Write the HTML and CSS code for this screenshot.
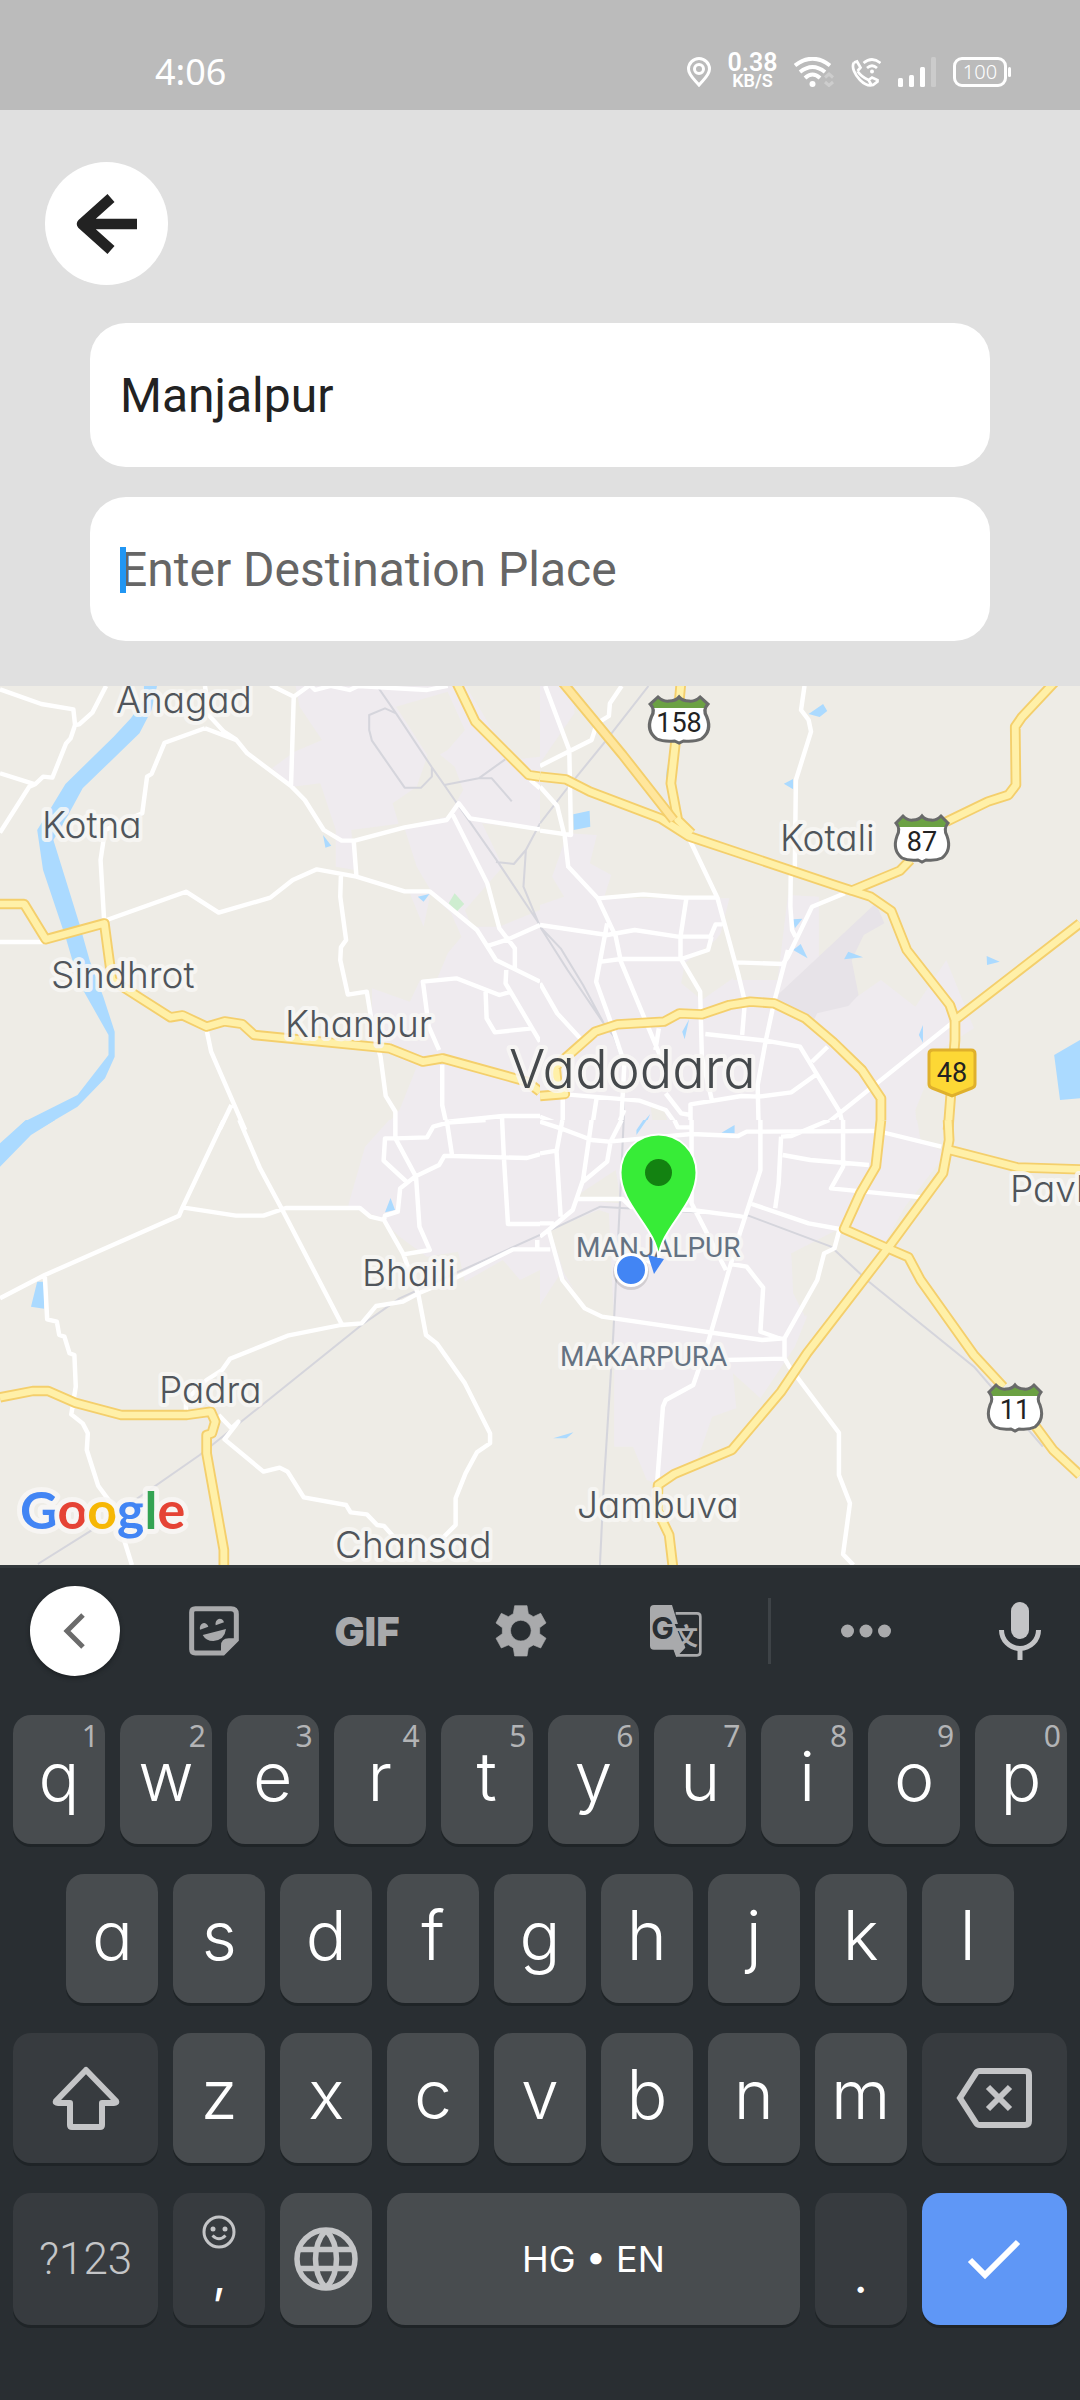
FILE: index.html
```html
<!DOCTYPE html>
<html lang="en">
<head>
<meta charset="utf-8">
<meta name="viewport" content="width=device-width, initial-scale=1">
<title>Choose destination</title>
<link rel="stylesheet" href="styles.css">
</head>
<body>
<div class="screen">
  <header class="status">
    <time class="clock">4:06</time>
    <div class="status-icons">
      <svg width="24" height="30" viewBox="0 0 24 30" fill="none" stroke="#fff" stroke-width="3"><path d="M12 28C7 22 1.500 18 1.500 12a10.500 10.500 0 0 1 21 0C22.500 18 17 22 12 28Z"/><circle cx="12" cy="12" r="4.500"/></svg>
      <div class="speed"><span class="speed-value">0.38</span><span class="speed-unit">KB/S</span></div>
      <svg width="40" height="30" viewBox="0 0 40 30" fill="none" stroke="#fff" stroke-width="4"><path d="M1 8.500Q18.500-5 36 8.500M6 15Q18.500 5 31 15M11 21Q18.500 14 26 21"/><circle cx="18.500" cy="27" r="3" fill="#fff" stroke="none"/><path d="M31 20.500l4-3.500 4 3.500M31 25l4 3.500 4-3.500" stroke="#cdcdcd" stroke-width="3"/></svg>
      <svg width="30" height="30" viewBox="0 0 30 30" fill="none" stroke="#fff" stroke-width="2.700"><path d="M3 5.500L6 4.500l3.500 6-3 3.500M3 5.500C0 10 4 18 9 23c4 4 8 6.500 13 5l4.500-3.500v-1.500L21 20.500 17.500 23C13 21 9 18 6.500 14M17.500 23l3 5"/><path d="M12.500 6Q21-1 29.500 6M16 11Q21 6.500 26 11"/><circle cx="21" cy="14.500" r="2" fill="#fff" stroke="none"/></svg>
      <svg width="38" height="30" viewBox="0 0 38 30" fill="#fff"><rect y="21" width="5" height="9" rx="1.500"/><rect x="11" y="18" width="5" height="12" rx="1.500"/><rect x="22" y="10" width="5" height="20" rx="1.500"/><rect x="33" width="5" height="30" rx="1.500" fill="#cbcbcb"/></svg>
      <div class="battery">100</div>
    </div>
  </header>

  <section class="search">
    <button class="back" aria-label="Back"><svg width="64" height="64" viewBox="0 0 64 64" fill="none" stroke="#222" stroke-width="10.500" stroke-linejoin="round"><path d="M62 32H10M36 6L7 32l29 26"/></svg></button>
    <div class="fields">
      <div class="field"><input class="place" type="text" value="Manjalpur" aria-label="Starting place"></div>
      <div class="field field-active"><input class="place" type="text" placeholder="Enter Destination Place" aria-label="Destination place"></div>
    </div>
  </section>

  <main class="map">
    <svg class="map-art" viewBox="0 0 1080 879" role="img" aria-label="Map of Vadodara">
      <rect class="land" width="1080" height="879"/>

      <!-- north-west tile -->
      <svg y="-6" width="540" height="450" viewBox="0 0 1568 1350" preserveAspectRatio="none" class="tile">
        <path class="urban" d="M855 0H1568V1350H1110L1160 1290 1210 1160 1110 1110 1080 1000 1080 925 1190 965 1220 900 1270 895 1300 820 1340 770 1310 700 1250 640 1230 740 1190 640 1250 630 1210 560 1170 430 1020 450 1030 570 975 560 975 450 930 310 850 320 790 265 855 215 935 180 870 80Z"/>
        <path class="land" d="M1140 370L1210 320 1250 200 1320 260 1345 330 1300 410 1160 440ZM1150 80L1300 35 1350 150 1300 210 1250 240ZM1340 0H1568V230L1480 240 1390 80ZM1350 690L1460 560 1400 430 1568 450V690L1450 740 1370 740Z"/>
        <path class="park" d="M1320 640L1348 672 1327 694 1303 670Z"/>
        <path class="water" d="M418 0H460L440 90 405 160 300 265 240 325 190 420 155 480 230 730 260 840 300 950 333 1055V1130L305 1195 225 1280 110 1350H45L70 1325 225 1245 315 1125V1065L230 910 190 770 125 570 108 450 150 380 190 312 330 170 380 115 418 60ZM938 465L962 497 945 503ZM1213 650L1247 642 1230 665Z"/>
        <path class="rail" d="M1095 18L1150 100 1254 262 1290 315 1328 372 1445 545 1568 735M1150 100L1118 85 1072 105V150L1080 182 1175 323H1223L1254 290V262M1290 315L1390 295 1467 238M1390 295H1428L1486 364M1440 546L1492 552 1527 510 1568 430M1527 510L1520 620 1568 740"/>
        <path class="road" d="M0 28L120 72 213 88 218 135 205 175 192 190 152 293 125 290 102 313 0 280M218 135L230 133 268 98 308 18M102 313L85 320 0 458M595 18L610 110 650 155 685 178 718 220 845 318 885 360 940 450 992 482H1030L1175 442 1297 420 1332 370 1365 415 1568 448M595 145L478 188 440 282 427 290 413 400 390 410 305 450 292 540 302 715M595 145L685 180M310 720L540 635 635 698 785 653 850 600 920 568 1035 590 1175 634H1248L1385 750 1440 840 1568 905M1027 482L1035 590M990 585L988 650 1005 780 990 802 988 840 1010 944 1065 935 1085 1060 1105 1130 1120 1248 1148 1295V1350M845 318L853 50 785 15M853 50L900 15 915 30 960 18 1015 30 1040 18 1240 30 1300 18M1310 395L1415 610 1450 745 1495 805V870M1415 798L1475 778 1568 735M1470 870L1468 910 1568 1085M1485 935L1450 945 1325 895 1228 905 1245 1040 1275 1110M1410 935L1413 1015 1437 1057 1545 1045M1284 1155V1275L1300 1350M1250 1345L1300 1325 1460 1308H1568M1458 1310V1350M0 786H125M600 1050L613 1115 712 1350M672 1275L637 1350M1540 300L1568 325"/>
        <path class="casing" d="M0 672H70L133 778 303 730 325 900 495 1012 530 1006 600 1040 652 1024 703 1032 738 1065 1130 1105 1228 1145 1285 1135 1530 1205 1568 1235M1322 0L1380 125 1535 285 1568 290"/>
        <path class="highway" d="M0 672H70L133 778 303 730 325 900 495 1012 530 1006 600 1040 652 1024 703 1032 738 1065 1130 1105 1228 1145 1285 1135 1530 1205 1568 1235M1322 0L1380 125 1535 285 1568 290"/>
      </svg>

      <!-- north-east tile -->
      <svg x="540" y="-6" width="540" height="450" viewBox="0 0 1568 1350" preserveAspectRatio="none" class="tile">
        <path class="urban" d="M0 675L70 650 35 590 80 460 165 465 145 550 207 585 185 655 550 655 515 800 580 860 560 900 690 900 720 645 810 650 810 830 960 700 900 830 920 950 990 900 1090 980 1180 840 1260 1045 1160 1110 1090 1290 1095 1350H0Z"/>
        <path class="urban" d="M0 0H95L100 100 0 250Z"/>
        <path class="land" d="M540 740L560 720 690 700V900L560 895 470 960 410 910 420 850 510 780ZM320 1270L360 1290 380 1350H330Z"/>
        <path class="airport" d="M680 955L975 670 1000 730 940 765 905 840 925 945 895 978 805 1000 790 1030Z"/>
        <path class="water" d="M97 403L144 392 146 440 98 450ZM780 102L822 72 834 93 812 111ZM708 311L735 297V328ZM735 718L762 716 740 745ZM735 810L757 792 777 835ZM883 838L895 815 938 832ZM1297 828L1335 845 1298 855ZM1493 1125L1568 1080V1255L1510 1260ZM1100 1065L1112 1035V1088ZM413 1055L433 1018 420 1078ZM280 1350L320 1302 300 1350ZM540 1350L563 1334V1350ZM366 290L370 250V300Z"/>
        <path class="rail" d="M315 18L185 190 75 330 0 430M0 740L60 805 125 915 185 1030 215 1070 243 1150V1350M0 740L80 870 185 1030"/>
        <path class="road" d="M15 18L85 210 90 465 0 452M0 258L150 180 165 130 200 108 203 70 237 18M0 320L50 378 72 470 82 560 168 655 300 643 415 653H515L435 480M168 655L220 770 235 845 350 1130M515 653L575 880 595 965 587 1065M195 730L163 905 205 1025 245 1150 235 1350M0 735L195 765 275 750 400 770H495L510 733H530M425 655L408 770V835L465 935 470 1130 500 1265M178 845L235 837H410L488 810 498 770M570 847L705 852 720 830 790 680 885 640M768 18L758 90 780 120 787 155 743 300 740 560 728 590 727 680 732 750 742 770M720 810L680 965 655 1085 632 1215 635 1350M0 910L50 1000 130 1090M480 1062L655 1082 755 1100 870 1295 883 1350M790 1145L835 1100M800 1185L730 1237 635 1250 585 1248 437 1273V1345M75 1243L290 1262 365 1290 400 1340 437 1343M365 1240L410 1300 437 1305M345 1045L335 1110M1195 1030L815 1345M66 1250V1350M165 1250L150 1350M0 1310L100 1350M245 1290L220 1350M640 1350H840"/>
        <path class="casing" d="M410 0L393 190 380 310 400 420 440 460M0 290L75 298 145 335 350 415 430 468 850 613 960 650 1020 693 1065 810 1190 975 1205 1020 1205 1080 1185 1350M850 613L905 632 1045 572 1075 540M1180 425L1300 365 1360 345 1382 315 1380 140 1400 110 1500 0M1205 1020L1568 730M0 1248L72 1242 50 1210 45 1160 160 1055 225 1033 360 1025 405 1000 470 1003 550 975 610 965 680 970 770 1015 850 1085 935 1170 990 1255V1350"/>
        <path class="highway" d="M410 0L393 190 380 310 400 420 440 460M0 290L75 298 145 335 350 415 430 468 850 613 960 650 1020 693 1065 810 1190 975 1205 1020 1205 1080 1185 1350M850 613L905 632 1045 572 1075 540M1180 425L1300 365 1360 345 1382 315 1380 140 1400 110 1500 0M1205 1020L1568 730M0 1248L72 1242 50 1210 45 1160 160 1055 225 1033 360 1025 405 1000 470 1003 550 975 610 965 680 970 770 1015 850 1085 935 1170 990 1255V1350"/>
        <path class="casing" d="M60 0L240 225 388 420"/>
        <path class="highway trunk" d="M60 0L240 225 388 420"/>
      </svg>

      <!-- south-west tile -->
      <svg y="434" width="540" height="450" viewBox="0 0 1568 1350" preserveAspectRatio="none" class="tile">
        <path class="urban" d="M1568 0V450L1510 480 1460 420 1350 485 1330 395 1240 410 1160 350 1100 290 1010 260 1060 80 1130 0Z"/>
        <path class="water" d="M0 70L75 0H160L90 45 0 140ZM108 485H128V566L90 560ZM1134 234L1147 270 1118 277Z"/>
        <path class="rail" d="M110 1332L260 1235 580 1005 1050 615 1160 535 1568 345"/>
        <path class="road" d="M650 0L530 262 520 287 130 465 0 535M695 0L755 145 820 270 992 612M530 262L685 287H765L830 264H1045L1075 290 1115 300 1170 400 1215 525 1237 645 1268 670 1350 790 1423 940V970L1385 997 1352 1060 1323 1135V1215L1260 1280M130 465L137 598 165 605 172 645 187 650 202 700 216 705 220 800 207 883 240 910 255 940 252 990 285 1097 330 1160 365 1275 383 1335M1115 300L1118 287 1155 275 1162 205 1205 170 1275 135 1290 108H1315L1530 114 1568 103M1148 0V55L1208 170 1218 320 1248 390 1172 403M1148 55H1118L1114 122 1180 185M1148 55L1240 52 1258 20 1300 8 1410 0M1297 0L1313 108M1458 0L1463 110 1475 312H1568M1568 388H1490L1320 475 1215 520 1170 545 1092 558 1050 610 990 615 835 647 668 716 645 750 600 780 540 840V875M1560 360V388M635 885L672 925 692 905 652 958 765 1055 812 1043 835 1055 882 1132 1005 1155 1018 1177 1065 1183 1095 1215 1115 1218 1160 1270"/>
        <path class="casing" d="M0 832L95 813H140L218 848 352 885H543L612 875 625 905 615 940 600 945V1000L650 1290V1350"/>
        <path class="highway" d="M0 832L95 813H140L218 848 352 885H543L612 875 625 905 615 940 600 945V1000L650 1290V1350"/>
      </svg>

      <!-- south-east tile -->
      <svg x="540" y="434" width="540" height="450" viewBox="0 0 1568 1350" preserveAspectRatio="none" class="tile">
        <path class="urban" d="M0 0H1095L1105 60 1180 100 1120 180 1060 260 1000 370 880 320 730 400 740 500 775 590 740 680 640 835 560 760 570 865 500 890 450 1040 340 1090 310 1080 270 980 215 980 215 600 140 560 60 460 0 555Z"/>
        <path class="land" d="M30 330L170 270 200 280 215 600 130 560 70 460ZM110 225L220 150 235 250 110 240ZM730 400L830 380 820 450 770 590 735 520Z"/>
        <path class="water" d="M280 45V30L300 0H310ZM527 38L565 15V40ZM38 955L97 937 77 955Z"/>
        <path class="rail" d="M243 0L232 250 213 640 185 1100 174 1335M0 345L175 260 450 277 605 287 845 380 955 485 1260 740 1460 980"/>
        <path class="road" d="M65 0L48 95 60 290M150 0L125 180 95 270 25 330 0 350M0 100L48 92M0 5L60 25 150 60 200 65 300 55 440 42 575 48 600 35 980 33 1165 80M237 0L205 65 195 125 125 185M110 237H240L265 262 440 270 590 290M0 310H40M0 388H30M25 330L65 480 130 565 180 590 645 660 710 655V715L725 742 868 938V1065L900 1150 880 1303 910 1335M440 0V250L540 450M640 0V150L580 340 490 660 445 795 365 840 357 860 340 1090M700 50L693 190 683 265M615 252L780 310 870 327 855 385 825 400 805 480 710 655M700 50L730 48 840 0M880 0V140L845 205 1110 232M705 105L785 120 955 135M555 432L600 440 648 503 640 635 700 657M540 720L715 716M390 0L400 22H440M310 420L345 440"/>
        <path class="casing" d="M990 0L975 140 930 220 883 327 1010 385 1070 412 1105 480 1260 705 1345 800M1440 920L1490 990 1568 1065M1185 0L1188 60 1170 160 1010 385 775 700 700 815 557 990 390 1062 343 1095 340 1170 375 1245 387 1350M1190 90L1385 142 1568 148"/>
        <path class="highway" d="M990 0L975 140 930 220 883 327 1010 385 1070 412 1105 480 1260 705 1345 800M1440 920L1490 990 1568 1065M1185 0L1188 60 1170 160 1010 385 775 700 700 815 557 990 390 1062 343 1095 340 1170 375 1245 387 1350M1190 90L1385 142 1568 148"/>
      </svg>

      <defs>
        <g id="shield">
          <path d="M9 2Q14 7 19 6 25 6 28 2 31 6 37 6 42 7 47 2L54 9Q49 15 53 22 58 36 48 44 42 47 32 46L28 48 24 46Q14 47 8 44-2 36 3 22 7 15 2 9Z" fill="#fff"/>
          <path d="M9 2Q14 7 19 6 25 6 28 2 31 6 37 6 42 7 47 2L54 9 52 13H4L2 9Z" fill="#6ba143"/>
          <path d="M9 2Q14 7 19 6 25 6 28 2 31 6 37 6 42 7 47 2L54 9Q49 15 53 22 58 36 48 44 42 47 32 46L28 48 24 46Q14 47 8 44-2 36 3 22 7 15 2 9Z" fill="none" stroke="#696a6a" stroke-width="3"/>
        </g>
      </defs>
      <g transform="translate(648 9) scale(1.110 1)"><use href="#shield"/></g>
      <use href="#shield" x="894" y="128"/>
      <use href="#shield" x="987" y="697"/>
      <path d="M933 364H971Q975 364 975 368V398Q975 401 972 402L952 410 932 402Q929 401 929 398V368Q929 364 933 364Z" fill="#fdd835" stroke="#dfb02c" stroke-width="3"/>
      <g class="route">
        <text x="679" y="46">158</text><text x="922" y="165">87</text><text x="1015" y="733">11</text><text x="952" y="396">48</text>
      </g>

      <g class="town">
        <text x="116" y="27">Anagad</text>
        <text x="42" y="152">Kotna</text>
        <text x="51" y="302">Sindhrot</text>
        <text x="285" y="351">Khanpur</text>
        <text x="780" y="165">Kotali</text>
        <text x="362" y="600">Bhaili</text>
        <text x="159" y="717">Padra</text>
        <text x="335" y="872">Chansad</text>
        <text x="577" y="832">Jambuva</text>
        <text x="1010" y="516">Pavl</text>
      </g>
      <text class="city" x="509" y="402">Vadodara</text>
      <g class="suburb">
        <text x="576" y="571">MANJALPUR</text>
        <text x="560" y="680">MAKARPURA</text>
      </g>

      <path d="M648 569L664 573 654 588Z" fill="#4285f4"/>
      <circle cx="631" cy="586" r="18" fill="#000" opacity=".12"/>
      <circle cx="631" cy="584" r="15.500" fill="#4285f4" stroke="#fff" stroke-width="3"/>
      <path d="M658.500 572C656 541 620.500 520 620.500 486.500a38 38 0 0 1 76 0C696.500 520 661 541 658.500 572Z" fill="#37ec37" stroke="#fff" stroke-width="2"/>
      <circle cx="658.500" cy="486.500" r="13.500" fill="#138211"/>

      <text class="google" x="20" y="843"><tspan fill="#4285f4">G</tspan><tspan fill="#e54335">o</tspan><tspan fill="#f6b705">o</tspan><tspan fill="#4285f4">g</tspan><tspan fill="#34a353">l</tspan><tspan fill="#e54335">e</tspan></text>
    </svg>
  </main>

  <section class="keyboard" aria-label="Keyboard">
    <div class="toolbar">
      <button class="tool collapse" aria-label="Collapse toolbar"><svg width="24" height="36" viewBox="0 0 24 36" fill="none" stroke="#6b6b6b" stroke-width="5"><path d="M20 2L4 18l16 16"/></svg></button>
      <button class="tool" aria-label="Stickers"><svg width="50" height="50" viewBox="-3 48 150 150"><path d="M16 56H123Q139 56 139 72V149L99 189H16Q5 189 5 178V67Q5 56 16 56Z" fill="none" stroke="#a9aaac" stroke-width="15"/><path d="M93 189V168Q93 145 116 145H143L100 194Z" fill="#a9aaac"/><path d="M30 119A13 15 0 0 1 55 110ZM77 106A13 15 0 0 1 102 97ZM38 135L108 117Q104 150 70 153 48 153 38 135Z" fill="#a9aaac"/></svg></button>
      <button class="tool gif">GIF</button>
      <button class="tool" aria-label="Settings"><svg width="52" height="52" viewBox="915 51 156 156"><path fill="#a9aaac" fill-rule="evenodd" stroke="#a9aaac" stroke-width="2" stroke-linejoin="round" d="M974 53H1011L1015 77 1030 86 1052 76 1068 105 1049 119V137L1068 151 1052 180 1030 171 1015 180 1011 204H974L970 180 955 171 934 180 918 151 937 137V119L918 105 934 76 955 86 970 77ZM992 97a31 31 0 1 0 1 0Z"/></svg></button>
      <button class="tool" aria-label="Translate"><svg width="52" height="52" viewBox="0 0 156 156"><path d="M77 25H141Q151 25 151 35V141Q151 151 141 151H81L66 110" fill="none" stroke="#a9aaac" stroke-width="8"/><path d="M12 0H66L106 128 80 156 72 134H12Q0 134 0 122V12Q0 0 12 0Z" fill="#a9aaac"/><text class="tr-g" x="4" y="103">G</text><path d="M74 57H102L113 115 98 114Z" fill="#292e32"/><text class="tr-w" x="72" y="121">文</text></svg></button>
      <span class="divider"></span>
      <button class="tool" aria-label="More"><svg width="50" height="14" viewBox="0 0 50 14" fill="#a9aaac"><circle cx="6.500" cy="7" r="6.500"/><circle cx="25" cy="7" r="6.500"/><circle cx="43.500" cy="7" r="6.500"/></svg></button>
      <button class="tool mic" aria-label="Voice input"><svg width="42" height="58" viewBox="0 0 42 58"><rect x="12" width="18" height="37" rx="9" fill="#c4c5c7"/><path d="M2.500 28a18.500 18.500 0 0 0 37 0M21 47v11" fill="none" stroke="#c4c5c7" stroke-width="5"/></svg></button>
    </div>
    <div class="keys">
      <button class="key">q<span class="hint">1</span></button><button class="key">w<span class="hint">2</span></button><button class="key">e<span class="hint">3</span></button><button class="key">r<span class="hint">4</span></button><button class="key">t<span class="hint">5</span></button><button class="key">y<span class="hint">6</span></button><button class="key">u<span class="hint">7</span></button><button class="key">i<span class="hint">8</span></button><button class="key">o<span class="hint">9</span></button><button class="key">p<span class="hint">0</span></button>
      <button class="key indent">a</button><button class="key">s</button><button class="key">d</button><button class="key">f</button><button class="key">g</button><button class="key">h</button><button class="key">j</button><button class="key">k</button><button class="key">l</button>
      <button class="key wide dark row-start" aria-label="Shift"><svg width="68" height="66" viewBox="0 0 68 66" fill="none" stroke="#c4c5c7" stroke-width="6" stroke-linejoin="round"><path d="M34 5L4 36q-1 2 2 2H18V60q0 2 2 2H48q2 0 2-2V38H62q3 0 2-2Z"/></svg></button>
      <button class="key">z</button><button class="key">x</button><button class="key">c</button><button class="key">v</button><button class="key">b</button><button class="key">n</button><button class="key">m</button>
      <button class="key wide dark" aria-label="Backspace"><svg width="76" height="60" viewBox="0 0 76 60" fill="none" stroke="#c4c5c7" stroke-width="6"><path d="M24 3H69q4 0 4 4V53q0 4-4 4H24q-3 0-4-2L4 30 20 5q1-2 4-2Z"/><path d="M32 19L54 41M54 19L32 41"/></svg></button>
      <button class="key wide dark symbols">?123</button>
      <button class="key dark stacked" aria-label="Comma and emoji"><svg width="34" height="34" viewBox="0 0 34 34" fill="none" stroke="#c4c5c7" stroke-width="3"><circle cx="17" cy="17" r="15"/><path d="M10.500 20.500q6.500 6.500 13 0"/><circle cx="11" cy="14" r="2.500" fill="#c4c5c7" stroke="none"/><circle cx="23" cy="14" r="2.500" fill="#c4c5c7" stroke="none"/></svg><span class="mark">,</span></button>
      <button class="key globe" aria-label="Switch language"><svg width="64" height="64" viewBox="0 0 64 64" fill="none" stroke="#c4c5c7" stroke-width="5.500"><circle cx="32" cy="32" r="29"/><path d="M5 22.500H59M5 41.500H59M32 3C18 18 18 46 32 61M32 3C46 18 46 46 32 61"/></svg></button>
      <button class="key space">HG • EN</button>
      <button class="key dark stacked"><span class="mark">.</span></button>
      <button class="key wide enter" aria-label="Done"><svg width="54" height="42" viewBox="0 0 54 42" fill="none" stroke="#fff" stroke-width="6"><path d="M3 22L18 37 51 4"/></svg></button>
    </div>
  </section>
</div>
</body>
</html>
```
FILE: styles.css
```css
* { box-sizing: border-box; }

body {
  margin: 0;
  background: #292e32;
  font-family: Roboto, "Noto Sans", sans-serif;
}

button {
  border: 0;
  padding: 0;
  background: none;
  font: inherit;
  color: inherit;
}

svg { display: block; }

.screen {
  display: flex;
  flex-direction: column;
  min-height: 100vh;
}

/* Status bar */
.status {
  display: flex;
  align-items: center;
  justify-content: space-between;
  height: 110px;
  padding: 34px 69px 0 155px;
  background: #bbb;
  color: #fff;
  font-family: "Noto Sans", sans-serif;
}

.clock {
  font-size: 36px;
  line-height: 40px;
}

.status-icons {
  display: flex;
  align-items: center;
  gap: 17px;
}

.speed {
  display: flex;
  flex-direction: column;
  align-items: center;
  width: 49px;
  font-family: Roboto, sans-serif;
  font-weight: 600;
  line-height: 18px;
}

.speed-value { font-size: 25px; }
.speed-unit { font-size: 18px; }

.battery {
  position: relative;
  width: 54px;
  height: 30px;
  margin-right: 4px;
  border: 3px solid #fff;
  border-radius: 9px;
  font-size: 20px;
  font-weight: 300;
  line-height: 24px;
  text-align: center;
}

.battery::after {
  content: "";
  position: absolute;
  right: -7px;
  top: 7px;
  width: 3px;
  height: 10px;
  border-radius: 2px;
  background: #fff;
}

/* Search header */
.search {
  padding: 52px 45px 45px;
  background: #e0e0e0;
}

.back {
  display: flex;
  align-items: center;
  justify-content: center;
  width: 123px;
  height: 123px;
  border-radius: 50%;
  background: #fff;
}

.fields {
  display: flex;
  flex-direction: column;
  gap: 30px;
  margin: 38px 45px 0;
}

.field { position: relative; }

.place {
  display: block;
  width: 100%;
  height: 144px;
  padding: 0 30px;
  border: 0;
  border-radius: 36px;
  background: #fff;
  color: #222;
  font-family: Roboto, sans-serif;
  font-size: 48px;
}

.place::placeholder {
  color: #666;
  opacity: 1;
}

.field-active::after {
  content: "";
  position: absolute;
  left: 30px;
  top: 50px;
  width: 6px;
  height: 46px;
  background: #2196f3;
}

/* Map */
.map-art {
  width: 100%;
  height: auto;
}

.tile { overflow: hidden; }
.urban { fill: #efebef; }
.land { fill: #eeece6; }
.airport { fill: #e7e3e8; }
.park { fill: #ceedd0; }
.water { fill: #abdaff; }

.rail, .road, .casing, .highway {
  fill: none;
  stroke-linejoin: round;
}

.rail { stroke: #d5d5dc; stroke-width: 6; }
.road { stroke: #fff; stroke-width: 13; }
.casing { stroke: #f4cf6c; stroke-width: 31; }
.highway { stroke: #fff0a8; stroke-width: 20; }
.trunk { stroke: #ffe69c; }

.town, .city, .suburb, .google {
  paint-order: stroke;
  stroke: #f8f7f5;
  stroke-opacity: .85;
  stroke-width: 8px;
  stroke-linejoin: round;
}

.town, .city {
  fill: #50555b;
  font-family: Inter, sans-serif;
  font-feature-settings: "cv11";
  font-weight: 300;
}

.town { font-size: 37px; }
.city { font-size: 54px; fill: #45494c; }

.suburb {
  fill: #647282;
  font-family: Roboto, sans-serif;
  font-size: 28px;
}

.route {
  fill: #222;
  font-family: Roboto, sans-serif;
  font-size: 27px;
  text-anchor: middle;
}

.google {
  font-family: Lato, sans-serif;
  font-size: 52px;
  font-weight: 700;
  stroke-width: 10px;
}

/* Keyboard */
.keyboard {
  flex: 1;
  border-top: 3px solid #33393c;
  padding-bottom: 75px;
  background: #292e32;
  color: #fff;
  font-family: Inter, "Noto Sans", sans-serif;
  font-feature-settings: "cv11";
}

.toolbar {
  display: grid;
  grid-template-columns: 138fr 152fr 154fr 154fr 156fr 30fr 164fr 132fr;
  align-items: center;
  height: 147px;
  padding: 18px 0 39px;
  color: #a9aaac;
}

.tool {
  display: flex;
  align-items: center;
  justify-content: center;
}

.collapse {
  width: 90px;
  height: 90px;
  margin-left: 30px;
  border-radius: 50%;
  background: #fff;
  box-shadow: 0 2px 4px #1b1f22;
}

.gif {
  font-size: 40px;
  font-weight: 900;
}

.tr-g {
  fill: #292e32;
  font-size: 90px;
  font-weight: 700;
}

.tr-w {
  fill: #a9aaac;
  font-family: "Noto Sans CJK SC", sans-serif;
  font-size: 72px;
  font-weight: 700;
}

.divider {
  justify-self: center;
  width: 3px;
  height: 66px;
  background: #3e4347;
}

.mic {
  justify-self: end;
  margin-right: 39px;
}

.keys {
  display: grid;
  grid-template-columns: repeat(20, minmax(0, 1fr));
  grid-template-rows: 129px 129px 130px 132px;
  row-gap: 30px;
  padding: 0 5px 0 6px;
}

.key {
  position: relative;
  grid-column: span 2;
  display: flex;
  align-items: center;
  justify-content: center;
  margin: 0 8px 0 7px;
  padding-bottom: 8px;
  border-radius: 18px;
  background: #484c4f;
  box-shadow: 0 3px 0 #1f2427;
  font-size: 68px;
  font-weight: 300;
  line-height: 80px;
}

.indent { grid-column: 2 / span 2; }
.dark { background: #373b3f; }

.wide {
  grid-column: span 3;
  padding-bottom: 0;
}

.row-start { grid-column: 1 / span 3; }
.globe { padding-bottom: 0; }

.hint {
  position: absolute;
  right: 6px;
  top: 5px;
  color: #b3b4b6;
  font-family: "Noto Sans", sans-serif;
  font-size: 30px;
  font-weight: 400;
  line-height: 32px;
}

.symbols {
  color: #c4c5c7;
  font-family: Roboto, sans-serif;
  font-size: 44px;
}

.stacked {
  flex-direction: column;
  justify-content: flex-end;
  gap: 11px;
  padding-bottom: 33px;
}

.mark {
  font-size: 48px;
  font-weight: 400;
  line-height: 32px;
}

.space {
  grid-column: span 8;
  padding-bottom: 0;
  font-size: 36px;
  font-weight: 400;
}

.enter { background: #5f97f6; }
```
